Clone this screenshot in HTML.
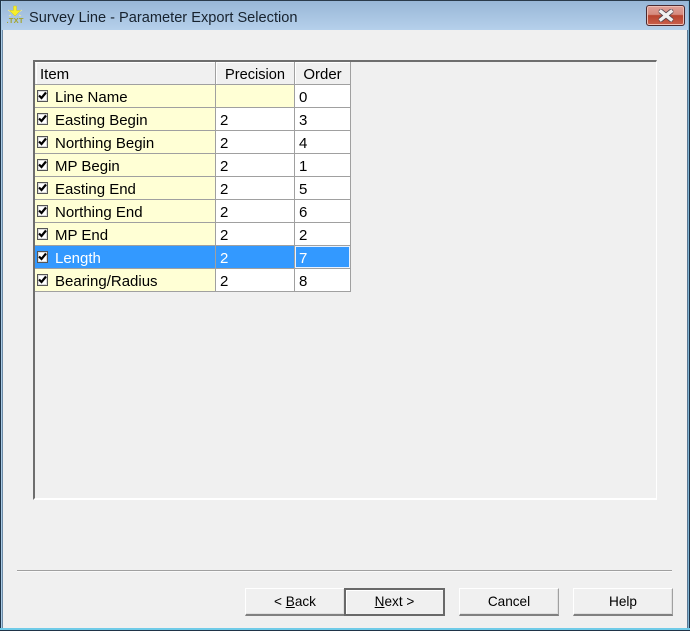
<!DOCTYPE html>
<html><head><meta charset="utf-8">
<style>
html,body{margin:0;padding:0;background:#f0f0f0}
#w{position:relative;width:690px;height:631px;overflow:hidden;background:#a9c6e2;font-family:"Liberation Sans",sans-serif}
#w div{position:absolute;box-sizing:border-box}
.t{font-size:15px;line-height:22px;margin-top:2px;color:#000;white-space:nowrap}
.l{background:#a0a0a0}
.y{background:#ffffd5;left:35px;width:180px;height:22px}
.c{background:#fff;height:22px}
.cb{left:37px;width:11px;height:12px;background:#fff;border:1px solid #555;box-shadow:inset 0 0 0 1px #ddd}
.cb svg{position:absolute;left:0;top:0}
.btn{background:#f0f0f0;border-top:1px solid #fff;border-left:1px solid #fff;border-right:1px solid #a0a0a0;border-bottom:2px solid #808080;box-shadow:inset -1px -1px 0 #e0e0e0;font-family:"Liberation Sans",sans-serif;font-size:13.6px;text-align:center;line-height:26px;color:#000}
</style></head><body>
<div id="w">
<div style="left:0;top:0;width:690px;height:30px;background:linear-gradient(#97b6d6,#b5d0eb)"></div>
<div style="left:0;top:0;width:690px;height:1px;background:#2a3a4a"></div>
<div style="left:0;top:0;width:1px;height:631px;background:#1f3347"></div>
<div style="left:689px;top:0;width:1px;height:631px;background:#1f3347"></div>
<div style="left:1px;top:1px;width:1px;height:629px;background:#a9cbe6"></div>
<div style="left:688px;top:1px;width:1px;height:629px;background:#7fb3d3"></div>
<div style="left:2px;top:30px;width:686px;height:598px;background:#f0f0f0;border-left:1px solid #6f8ba6;border-right:1px solid #5a7894"></div>
<div style="left:0;top:628px;width:690px;height:2px;background:#6fcbe8"></div>
<div style="left:0;top:630px;width:690px;height:1px;background:#1f3347"></div>

<svg style="position:absolute;left:5px;top:5px" width="20" height="20" viewBox="0 0 20 20">
<path d="M3 5L6 7M17 5L14 7M4 11L6 10M16 11L14 10" stroke="#e8e6a0" stroke-width="1"/>
<path d="M8.500 1h3v4.500h4L10 11 4.500 5.500h4z" fill="#f7ee2a" stroke="#d3c41c" stroke-width=".5"/>
<text x="1.500" y="18" font-family="Liberation Sans" font-size="7.500" font-weight="bold" fill="#a3a32a" textLength="17">.TXT</text>
</svg>
<div class="t" style="left:29px;top:5px;font-size:14.6px;color:#17222e">Survey Line - Parameter Export Selection</div>

<div style="left:646px;top:5px;width:39px;height:21px;border:1px solid #4a2a30;border-radius:3px;background:linear-gradient(#e0a097 0,#d58a7e 45%,#b8432e 50%,#c8604c 100%);box-shadow:inset 0 0 0 1px #eebfb5"></div>
<svg style="position:absolute;left:658px;top:9px" width="16" height="13" viewBox="0 0 16 13">
<path d="M3 2.500L13 10.500M13 2.500L3 10.500" stroke="#50404a" stroke-width="5" stroke-linecap="round"/>
<path d="M3 2.500L13 10.500M13 2.500L3 10.500" stroke="#f0f0f0" stroke-width="3.400" stroke-linecap="square"/>
</svg>

<!-- panel -->
<div style="left:33px;top:60px;width:624px;height:440px;background:#f0f0f0;border-top:2px solid #6e6e6e;border-left:2px solid #6e6e6e;border-right:1px solid #fff;border-bottom:2px solid #fff"></div>

<!-- header cells -->
<div style="left:35px;top:62px;width:316px;height:22px;background:#f0f0f0"></div>
<div style="left:35px;top:62px;width:180px;height:1px;background:#fff"></div>
<div style="left:216px;top:62px;width:78px;height:1px;background:#fff"></div>
<div style="left:295px;top:62px;width:55px;height:1px;background:#fff"></div>
<div style="left:36px;top:62px;width:1px;height:22px;background:#fff"></div>
<div style="left:216px;top:62px;width:1px;height:22px;background:#fff"></div>
<div style="left:295px;top:62px;width:1px;height:22px;background:#fff"></div>
<div class="t" style="left:40px;top:62px">Item</div>
<div class="t" style="left:216px;top:62px;width:78px;text-align:center;font-size:14.6px">Precision</div>
<div class="t" style="left:295px;top:62px;width:55px;text-align:center">Order</div>

<!-- rows -->
<div class="y" style="top:85px"></div><div class="y" style="left:216px;width:78px;top:85px"></div><div class="c" style="left:295px;width:55px;top:85px"></div>
<div class="y" style="top:108px"></div><div class="c" style="left:216px;width:78px;top:108px"></div><div class="c" style="left:295px;width:55px;top:108px"></div>
<div class="y" style="top:131px"></div><div class="c" style="left:216px;width:78px;top:131px"></div><div class="c" style="left:295px;width:55px;top:131px"></div>
<div class="y" style="top:154px"></div><div class="c" style="left:216px;width:78px;top:154px"></div><div class="c" style="left:295px;width:55px;top:154px"></div>
<div class="y" style="top:177px"></div><div class="c" style="left:216px;width:78px;top:177px"></div><div class="c" style="left:295px;width:55px;top:177px"></div>
<div class="y" style="top:200px"></div><div class="c" style="left:216px;width:78px;top:200px"></div><div class="c" style="left:295px;width:55px;top:200px"></div>
<div class="y" style="top:223px"></div><div class="c" style="left:216px;width:78px;top:223px"></div><div class="c" style="left:295px;width:55px;top:223px"></div>
<div style="left:35px;top:246px;width:315px;height:22px;background:#3399ff"></div>
<div style="left:295px;top:246px;width:55px;height:22px;background:#3399ff;border:1px solid #e8f2ff"></div>
<div class="y" style="top:269px"></div><div class="c" style="left:216px;width:78px;top:269px"></div><div class="c" style="left:295px;width:55px;top:269px"></div>

<!-- grid lines -->
<div class="l" style="left:35px;top:84px;width:316px;height:1px"></div>
<div class="l" style="left:35px;top:107px;width:316px;height:1px"></div>
<div class="l" style="left:35px;top:130px;width:316px;height:1px"></div>
<div class="l" style="left:35px;top:153px;width:316px;height:1px"></div>
<div class="l" style="left:35px;top:176px;width:316px;height:1px"></div>
<div class="l" style="left:35px;top:199px;width:316px;height:1px"></div>
<div class="l" style="left:35px;top:222px;width:316px;height:1px"></div>
<div class="l" style="left:35px;top:245px;width:316px;height:1px"></div>
<div class="l" style="left:35px;top:268px;width:316px;height:1px"></div>
<div class="l" style="left:35px;top:291px;width:316px;height:1px"></div>
<div class="l" style="left:215px;top:62px;width:1px;height:230px"></div>
<div class="l" style="left:294px;top:62px;width:1px;height:230px"></div>
<div class="l" style="left:350px;top:62px;width:1px;height:230px"></div>

<!-- text -->
<div class="t" style="left:55px;top:85px">Line Name</div><div class="t" style="left:299px;top:85px">0</div>
<div class="t" style="left:55px;top:108px">Easting Begin</div><div class="t" style="left:220px;top:108px">2</div><div class="t" style="left:299px;top:108px">3</div>
<div class="t" style="left:55px;top:131px">Northing Begin</div><div class="t" style="left:220px;top:131px">2</div><div class="t" style="left:299px;top:131px">4</div>
<div class="t" style="left:55px;top:154px">MP Begin</div><div class="t" style="left:220px;top:154px">2</div><div class="t" style="left:299px;top:154px">1</div>
<div class="t" style="left:55px;top:177px">Easting End</div><div class="t" style="left:220px;top:177px">2</div><div class="t" style="left:299px;top:177px">5</div>
<div class="t" style="left:55px;top:200px">Northing End</div><div class="t" style="left:220px;top:200px">2</div><div class="t" style="left:299px;top:200px">6</div>
<div class="t" style="left:55px;top:223px">MP End</div><div class="t" style="left:220px;top:223px">2</div><div class="t" style="left:299px;top:223px">2</div>
<div class="t" style="left:55px;top:246px;color:#fff">Length</div><div class="t" style="left:220px;top:246px;color:#fff">2</div><div class="t" style="left:299px;top:246px;color:#fff">7</div>
<div class="t" style="left:55px;top:269px">Bearing/Radius</div><div class="t" style="left:220px;top:269px">2</div><div class="t" style="left:299px;top:269px">8</div>

<!-- checkboxes -->
<div class="cb" style="top:90px"><svg width="10" height="10" viewBox="0 0 10 10"><path d="M1 4.500L3.500 7L8 1.500" fill="none" stroke="#000" stroke-width="2.200"/></svg></div>
<div class="cb" style="top:113px"><svg width="10" height="10" viewBox="0 0 10 10"><path d="M1 4.500L3.500 7L8 1.500" fill="none" stroke="#000" stroke-width="2.200"/></svg></div>
<div class="cb" style="top:136px"><svg width="10" height="10" viewBox="0 0 10 10"><path d="M1 4.500L3.500 7L8 1.500" fill="none" stroke="#000" stroke-width="2.200"/></svg></div>
<div class="cb" style="top:159px"><svg width="10" height="10" viewBox="0 0 10 10"><path d="M1 4.500L3.500 7L8 1.500" fill="none" stroke="#000" stroke-width="2.200"/></svg></div>
<div class="cb" style="top:182px"><svg width="10" height="10" viewBox="0 0 10 10"><path d="M1 4.500L3.500 7L8 1.500" fill="none" stroke="#000" stroke-width="2.200"/></svg></div>
<div class="cb" style="top:205px"><svg width="10" height="10" viewBox="0 0 10 10"><path d="M1 4.500L3.500 7L8 1.500" fill="none" stroke="#000" stroke-width="2.200"/></svg></div>
<div class="cb" style="top:228px"><svg width="10" height="10" viewBox="0 0 10 10"><path d="M1 4.500L3.500 7L8 1.500" fill="none" stroke="#000" stroke-width="2.200"/></svg></div>
<div class="cb" style="top:251px"><svg width="10" height="10" viewBox="0 0 10 10"><path d="M1 4.500L3.500 7L8 1.500" fill="none" stroke="#000" stroke-width="2.200"/></svg></div>
<div class="cb" style="top:274px"><svg width="10" height="10" viewBox="0 0 10 10"><path d="M1 4.500L3.500 7L8 1.500" fill="none" stroke="#000" stroke-width="2.200"/></svg></div>

<!-- divider -->
<div style="left:17px;top:570px;width:655px;height:1px;background:#a0a0a0"></div>
<div style="left:17px;top:571px;width:655px;height:1px;background:#fafafa"></div>

<!-- buttons -->
<div class="btn" style="left:245px;top:588px;width:100px;height:28px">&lt; <u>B</u>ack</div>
<div class="btn" style="left:344px;top:588px;width:101px;height:28px;border:2px solid #696969;line-height:24px;box-shadow:inset 1px 1px 0 #fff"><u>N</u>ext &gt;</div>
<div class="btn" style="left:459px;top:588px;width:100px;height:28px">Cancel</div>
<div class="btn" style="left:573px;top:588px;width:100px;height:28px">Help</div>
</div>
</body></html>
